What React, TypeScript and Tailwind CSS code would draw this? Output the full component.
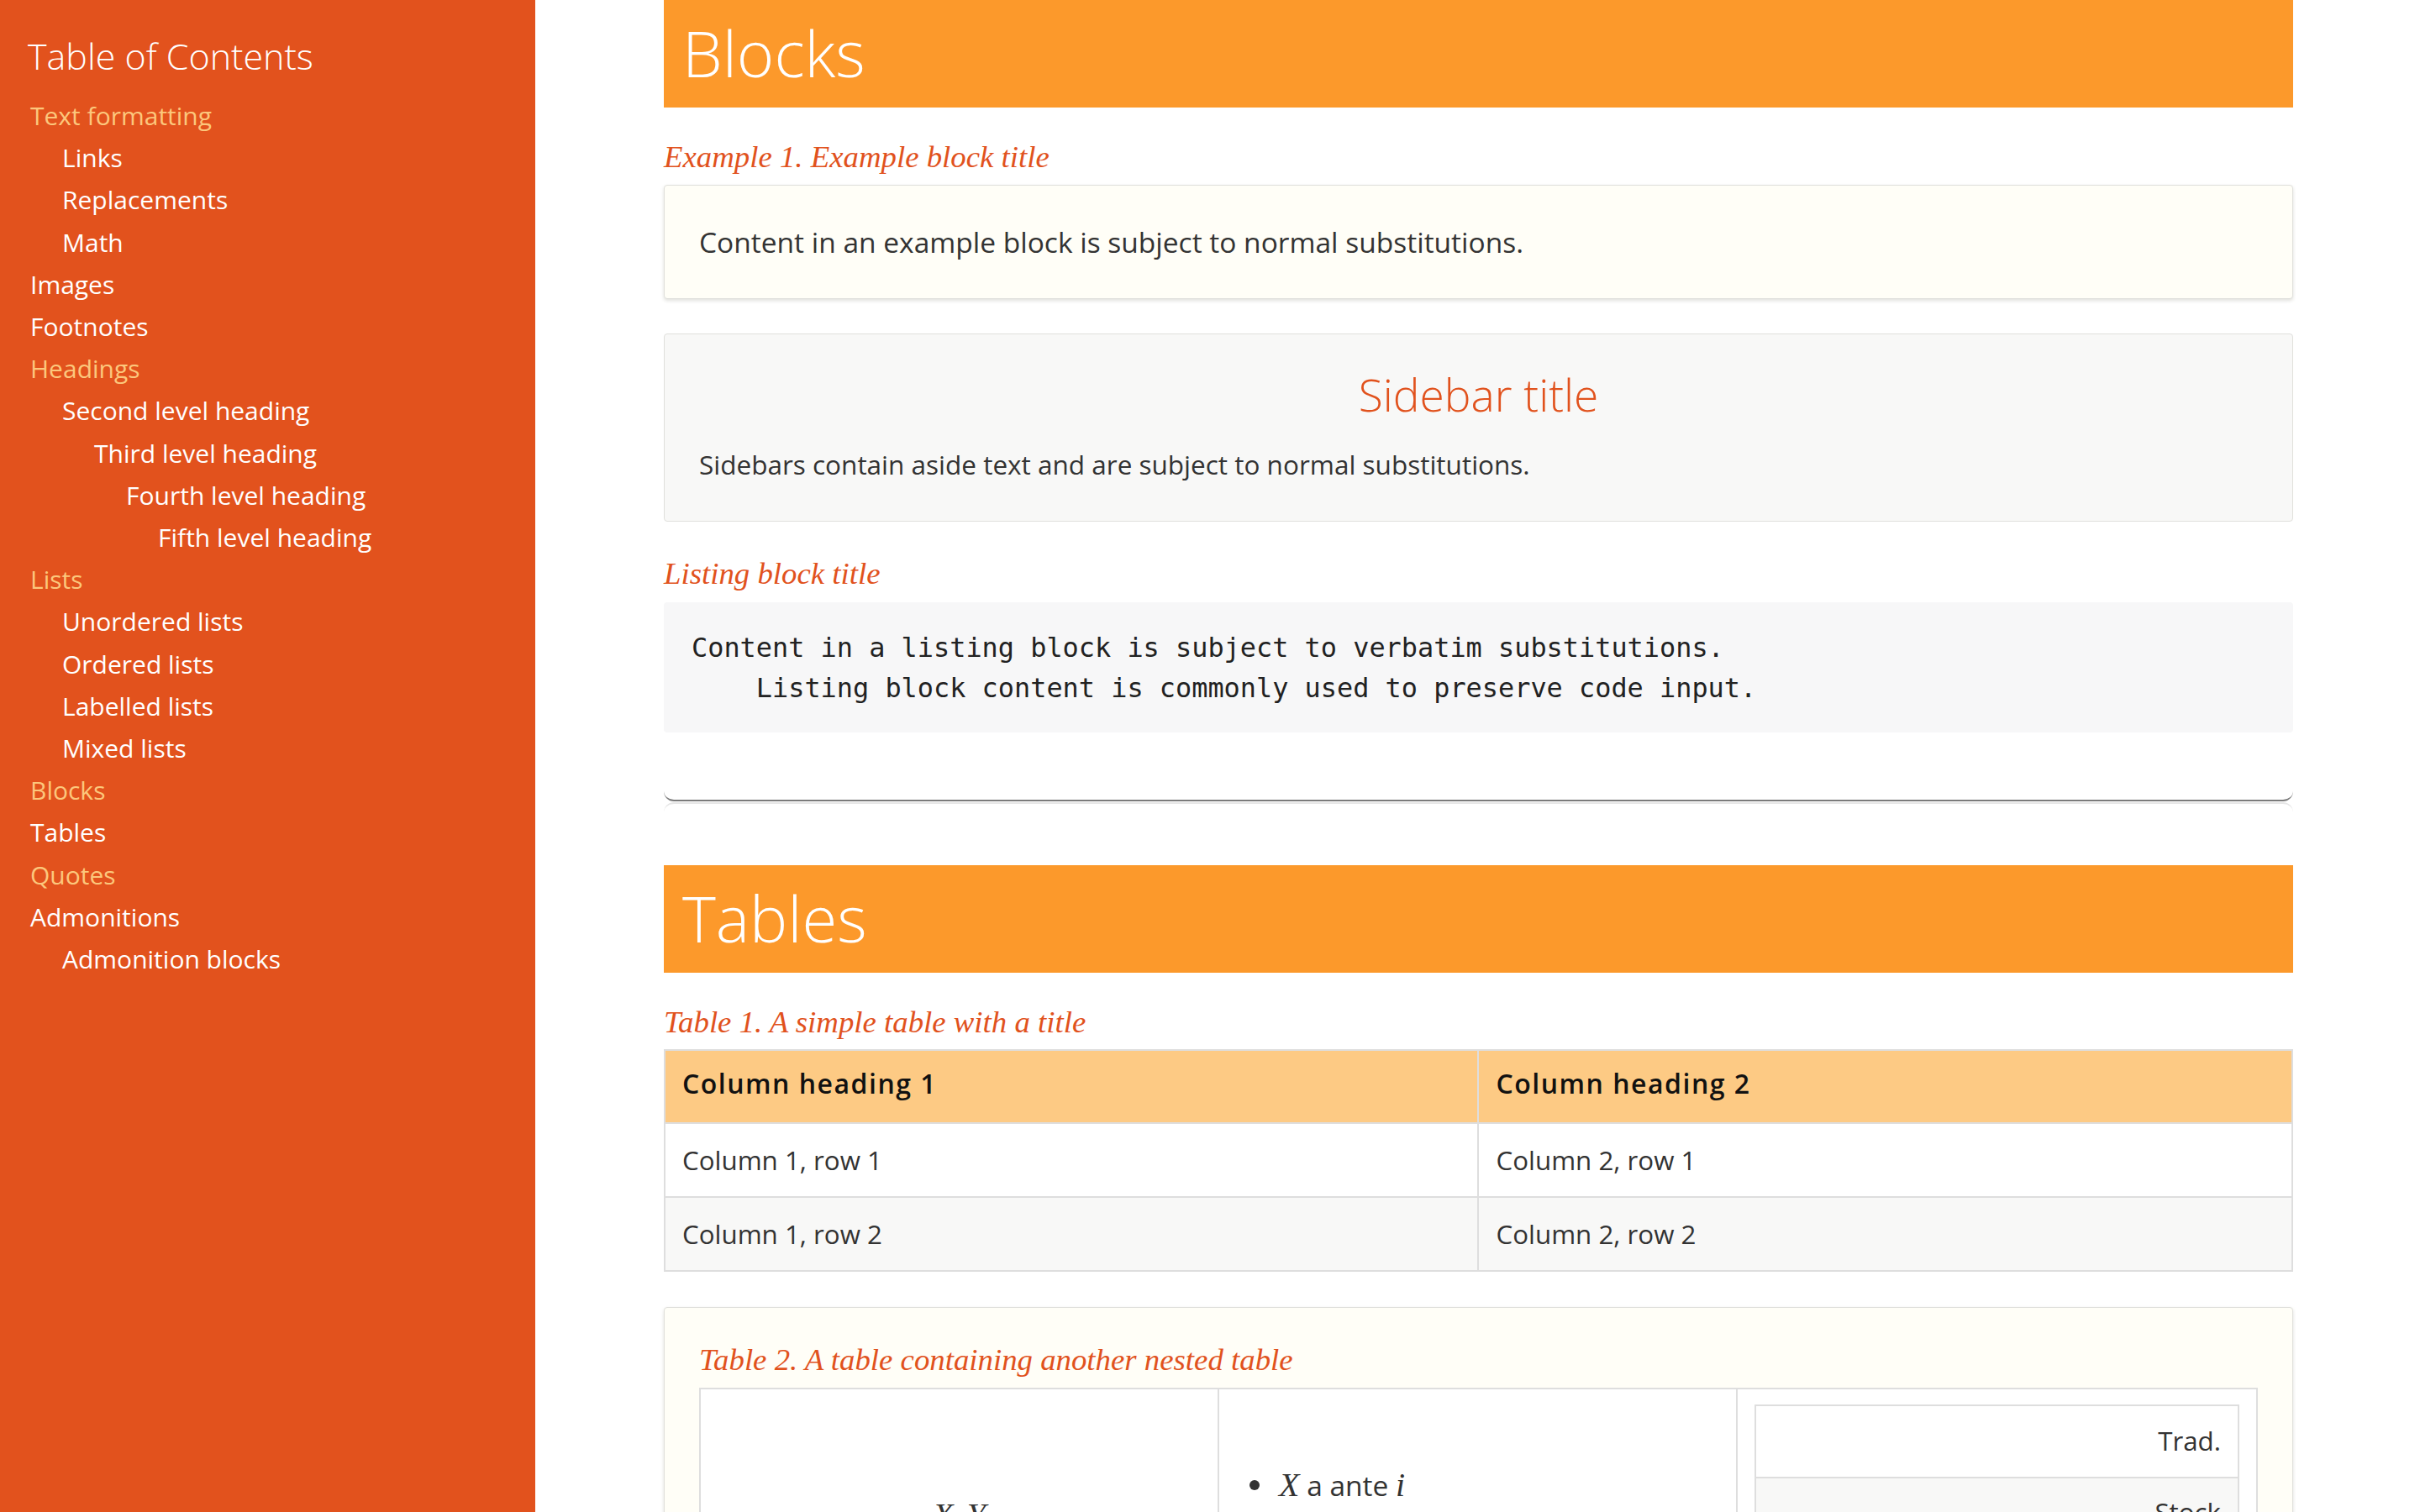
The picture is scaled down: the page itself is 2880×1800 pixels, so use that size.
import React from "react";

const toc: { label: string; level: number; active?: boolean }[] = [
  { label: "Text formatting", level: 1, active: true },
  { label: "Links", level: 2 },
  { label: "Replacements", level: 2 },
  { label: "Math", level: 2 },
  { label: "Images", level: 1 },
  { label: "Footnotes", level: 1 },
  { label: "Headings", level: 1, active: true },
  { label: "Second level heading", level: 2 },
  { label: "Third level heading", level: 3 },
  { label: "Fourth level heading", level: 4 },
  { label: "Fifth level heading", level: 5 },
  { label: "Lists", level: 1, active: true },
  { label: "Unordered lists", level: 2 },
  { label: "Ordered lists", level: 2 },
  { label: "Labelled lists", level: 2 },
  { label: "Mixed lists", level: 2 },
  { label: "Blocks", level: 1, active: true },
  { label: "Tables", level: 1 },
  { label: "Quotes", level: 1, active: true },
  { label: "Admonitions", level: 1 },
  { label: "Admonition blocks", level: 2 },
];

const indent: Record<number, string> = {
  1: "pl-[36px]",
  2: "pl-[74px]",
  3: "pl-[112px]",
  4: "pl-[150px]",
  5: "pl-[188px]",
};

function SectionBar({ title }: { title: string }) {
  return (
    <div className="h-[128px] bg-[#fc992b] pl-[22px] text-[76px] font-light leading-[126px] text-white">
      {title}
    </div>
  );
}

function Caption({ children, className = "" }: { children: React.ReactNode; className?: string }) {
  return (
    <div
      className={
        "font-['Liberation_Serif',serif] text-[36.8px] italic leading-[40px] text-[#e1521d] " + className
      }
    >
      {children}
    </div>
  );
}

function MathX({ children }: { children: React.ReactNode }) {
  return <span className="font-['Liberation_Serif',serif] text-[40px] italic">{children}</span>;
}

export default function App() {
  return (
    <div className="flex h-[1800px] w-[2880px] overflow-hidden bg-white font-['Open_Sans','Noto_Sans',sans-serif]">
      {/* Sidebar */}
      <aside className="w-[637px] shrink-0 bg-[#e2521d]">
        <div className="pl-[33px] pt-[37px] text-[43px] font-light leading-[60px] text-white">
          Table of Contents
        </div>
        <ul className="mt-[16px]">
          {toc.map((t) => (
            <li
              key={t.label}
              className={
                "text-[30px] leading-[50.2px] whitespace-nowrap " +
                indent[t.level] +
                (t.active ? " text-[#fcc77c]" : " text-white")
              }
            >
              {t.label}
            </li>
          ))}
        </ul>
      </aside>

      {/* Main */}
      <main className="flex-1">
        <div className="ml-[153px] w-[1939px]">
          <SectionBar title="Blocks" />

          <Caption className="mt-[39px]">Example 1. Example block title</Caption>
          <div className="mt-[13px] rounded-[4px] border border-[#e0e0dc] bg-[#fffef7] pb-[41px] pl-[41px] pt-[41px] text-[33.5px] leading-[52px] text-[#333] shadow-[0_2px_4px_#e0e0dc]">
            Content in an example block is subject to normal substitutions.
          </div>

          <div className="mt-[41px] rounded-[4px] border border-[#e0e0dc] bg-[#f8f8f7] pb-[41px] pl-[41px] pr-[41px] pt-[40px]">
            <div className="text-center text-[53.3px] font-light leading-[64px] text-[#e1521d]">
              Sidebar title
            </div>
            <div className="mt-[25px] text-[31.5px] leading-[52px] text-[#333]">
              Sidebars contain aside text and are subject to normal substitutions.
            </div>
          </div>

          <Caption className="mt-[42px]">Listing block title</Caption>
          <pre className="mt-[14px] rounded-[4px] bg-[#f7f7f8] pb-[29px] pl-[33px] pt-[31px] font-['DejaVu_Sans_Mono',monospace] text-[31.9px] leading-[47.5px] text-[#222]">
            {"Content in a listing block is subject to verbatim substitutions.\n    Listing block content is commonly used to preserve code input."}
          </pre>

          {/* Horizontal rule */}
          <div className="mt-[70px] h-[12px] rounded-b-[14px] border-b-2 border-[#7b7b7b]" />
          <div className="mt-[1px] h-[12px] rounded-t-[14px] border-t-2 border-[#e6e6e6]" />

          <div className="mt-[63px]">
            <SectionBar title="Tables" />
          </div>

          <Caption className="mt-[39px]">Table 1. A simple table with a title</Caption>
          <div className="mt-[12px] border-2 border-[#dedede]">
            <div className="grid grid-cols-2 border-b-2 border-[#dedede] bg-[#fdca84]">
              <div className="border-r-2 border-[#dedede] pb-[22px] pl-[20px] pt-[15px] text-[32px] font-semibold leading-[48px] tracking-[1.5px] text-[#111]">
                Column heading 1
              </div>
              <div className="pb-[22px] pl-[21px] pt-[15px] text-[32px] font-semibold leading-[48px] tracking-[1.5px] text-[#111]">
                Column heading 2
              </div>
            </div>
            <div className="grid grid-cols-2 border-b-2 border-[#dedede] bg-white">
              <div className="border-r-2 border-[#dedede] py-[19px] pl-[20px] text-[31.3px] leading-[48px] text-[#333]">
                Column 1, row 1
              </div>
              <div className="py-[19px] pl-[21px] text-[31.3px] leading-[48px] text-[#333]">Column 2, row 1</div>
            </div>
            <div className="grid grid-cols-2 bg-[#f8f8f7]">
              <div className="border-r-2 border-[#dedede] py-[19px] pl-[20px] text-[31.3px] leading-[48px] text-[#333]">
                Column 1, row 2
              </div>
              <div className="py-[19px] pl-[21px] text-[31.3px] leading-[48px] text-[#333]">Column 2, row 2</div>
            </div>
          </div>

          <div className="mt-[42px] rounded-[4px] border border-[#e0e0dc] bg-[#fffef7] pl-[41px] pr-[41px] pt-[42px] pb-[40px] shadow-[0_2px_4px_#e0e0dc]">
            <Caption>Table 2. A table containing another nested table</Caption>
            <div className="mt-[13px] grid grid-cols-3 border-2 border-[#dedede] bg-white text-[31.3px] leading-[48px] text-[#333]">
              <div className="border-r-2 border-[#dedede] pt-[126px] text-center">
                <MathX>X</MathX>, <MathX>Y</MathX>
              </div>
              <div className="border-r-2 border-[#dedede] pl-[36px] pt-[90px]">
                <ul>
                  <li className="flex items-center">
                    <span className="mr-[23px] inline-block h-[12px] w-[12px] rounded-full bg-[#333]" />
                    <span className="text-[33.5px]">
                      <MathX>X</MathX> a ante <MathX>i</MathX>
                    </span>
                  </li>
                  <li className="flex items-center">
                    <span className="mr-[23px] inline-block h-[12px] w-[12px] rounded-full bg-[#333]" />
                    <span className="text-[33.5px]">
                      <MathX>Y</MathX> a ante <MathX>j</MathX>
                    </span>
                  </li>
                </ul>
              </div>
              <div className="px-[20px] pb-[18px] pt-[18px]">
                <div className="border-2 border-[#dedede]">
                  <div className="border-b-2 border-[#dedede] bg-white pb-[19px] pr-[20px] pt-[17px] text-right">
                    Trad.
                  </div>
                  <div className="bg-[#f8f8f7] pb-[20px] pr-[20px] pt-[16px] text-right">Stock</div>
                </div>
              </div>
            </div>
          </div>
        </div>
      </main>
    </div>
  );
}
